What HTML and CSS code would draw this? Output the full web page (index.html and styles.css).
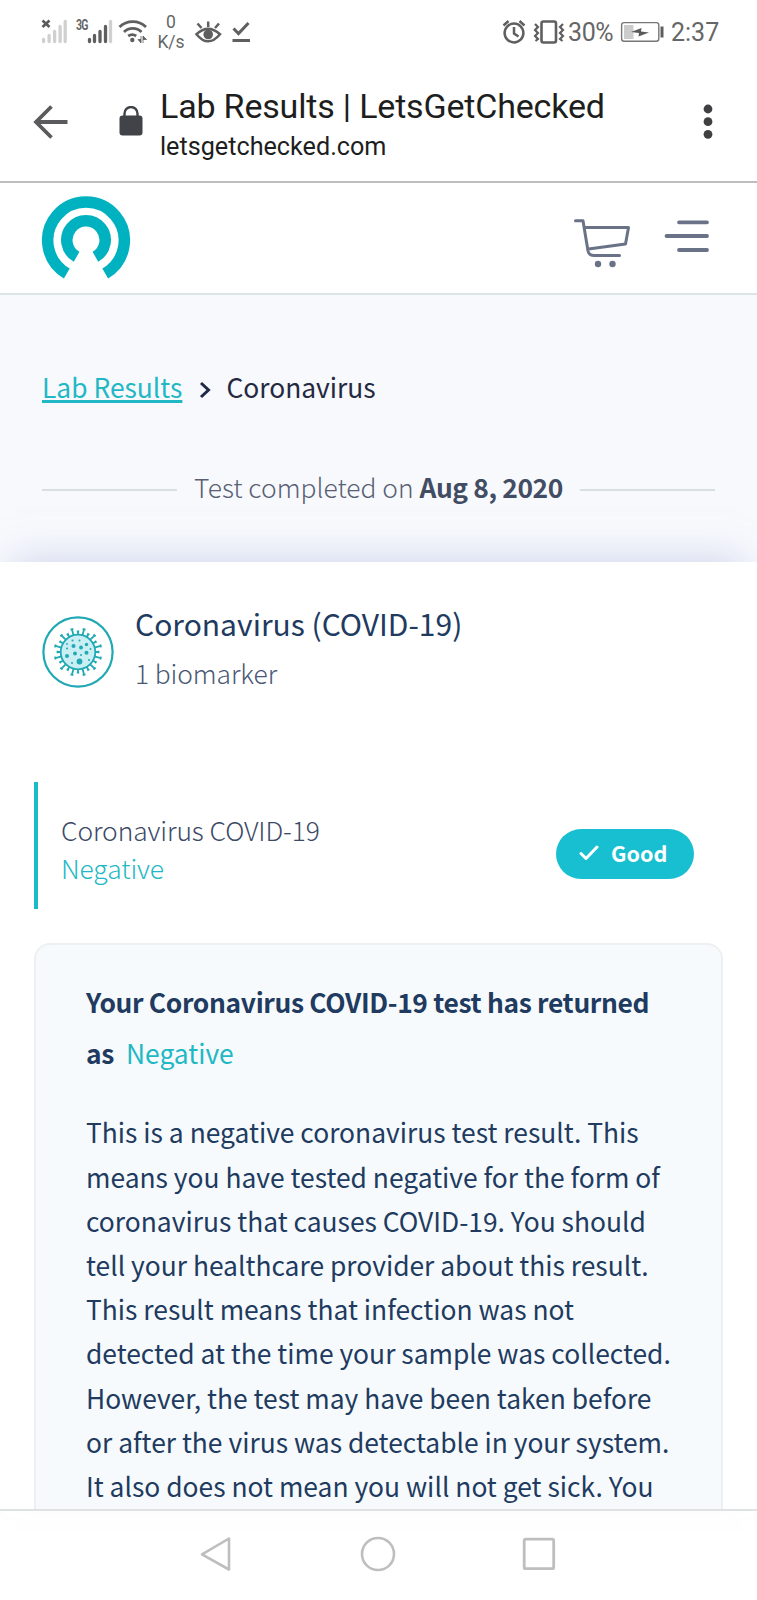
FILE: index.html
```html
<!DOCTYPE html>
<html lang="en">
<head>
<meta charset="utf-8">
<title>Lab Results | LetsGetChecked</title>
<link rel="stylesheet" href="styles.css">
</head>
<body>
<div class="phone">
  <div class="status">
    <svg class="ic-nosim" width="28" height="28" viewBox="40 17 28 28"><path d="M42.500 20.500l7 6.500M49.500 20.500l-7 6.500" stroke="#5a5a5a" stroke-width="2.600"/><path d="M43.600 39.500v2M49.100 35.500v6M54.600 31.500v10M60.100 26.500v15M65.200 21.500v20" stroke="#d0d0d0" stroke-width="3.300" stroke-linecap="round"/></svg>
    <span class="net">3G</span>
    <svg class="ic-signal" width="26" height="28" viewBox="87 17 26 28"><g stroke="#5f5f5f" stroke-width="3.300" stroke-linecap="round"><path d="M89.500 39.500v2M94.500 35.500v6M100 31.500v10M105.500 26.500v15"/><path d="M110.500 21.500v20" stroke="#d0d0d0"/></g></svg>
    <svg class="ic-wifi" width="30" height="28" viewBox="118 17 30 28"><g fill="none" stroke="#5f5f5f" stroke-width="2.800"><path d="M119.500 27a19 19 0 0 1 26.500 0M124 32a12.500 12.500 0 0 1 17.500 0M128.200 36a7 7 0 0 1 8 0"/></g><circle cx="132.300" cy="40" r="2.200" fill="#5f5f5f"/><path d="M141 36v7l-3-3.500h3M143 43v-7l3.500 3.500H143" fill="#5f5f5f" stroke="#5f5f5f" stroke-width=".8"/></svg>
    <span class="speed"><span>0</span><span>K/s</span></span>
    <svg class="ic-eye" width="28" height="28" viewBox="194 17 28 28"><path d="M196.500 34.200Q208 23.500 220 34.200Q208 48.500 196.500 34.200ZM208.200 27v-5.500M201.500 28l-4-4.500M215 28l4-4.500" fill="none" stroke="#5f5f5f" stroke-width="2.500"/><circle cx="208.200" cy="34.500" r="4.800" fill="#5f5f5f"/></svg>
    <svg class="ic-done" width="22" height="28" viewBox="230 17 22 28"><path d="M233.500 28.500l5 5L248.500 23M232.500 40.500h17.500" fill="none" stroke="#5f5f5f" stroke-width="3"/></svg>
    <span class="grow"></span>
    <svg class="ic-alarm" width="26" height="28" viewBox="501 17 26 28"><g fill="none" stroke="#5f5f5f" stroke-width="2.500"><circle cx="514" cy="33" r="9.400"/><path d="M514 27v6.500l4.500 3M503.500 25.500l5-4.500M524.500 25.500l-5-4.500"/></g></svg>
    <svg class="ic-vibrate" width="32" height="28" viewBox="533 17 32 28"><rect x="541.500" y="21.500" width="14.500" height="21" rx="2" fill="none" stroke="#5f5f5f" stroke-width="2.600"/><path d="M535 24l3 3-3 3 3 3-3 3 3 3-2.500 2M563 24l-3 3 3 3-3 3 3 3-3 3 2.500 2" fill="none" stroke="#5f5f5f" stroke-width="2.200"/></svg>
    <span class="pct">30%</span>
    <svg class="ic-batt" width="44" height="28" viewBox="620 17 44 28"><rect x="621.600" y="22.600" width="37.200" height="18.600" rx="2.500" fill="none" stroke="#777" stroke-width="1.400"/><path d="M624 25h9.500v14H624z" fill="#ccc"/><path d="M631 32l10.500-4-.5 3.500 8 1-10.500 4 .5-3.500z" fill="#5a5a5a"/><path d="M662 26.500v11" stroke="#5f5f5f" stroke-width="3"/></svg>
    <span class="time">2:37</span>
  </div>

  <div class="chrome">
    <svg class="ic-back" width="36" height="36" viewBox="0 0 36 36"><path d="M34.500 18H4M18.500 2.500L3 18l15.500 15.500" fill="none" stroke="#5b5b5e" stroke-width="3.800"/></svg>
    <svg class="ic-lock" width="24" height="30" viewBox="0 0 24 30"><rect x="0.500" y="9.500" width="23" height="20" rx="3" fill="#404347"/><path d="M5.500 11V7.500a6.500 6.500 0 0 1 13 0V11" fill="none" stroke="#404347" stroke-width="2.400"/></svg>
    <div class="page-id">
      <div class="page-title">Lab Results | LetsGetChecked</div>
      <div class="page-url">letsgetchecked.com</div>
    </div>
    <svg class="ic-more" width="10" height="36" viewBox="0 0 10 36"><g fill="#404042"><circle cx="5" cy="5" r="4.400"/><circle cx="5" cy="17.700" r="4.400"/><circle cx="5" cy="30.300" r="4.400"/></g></svg>
  </div>

  <div class="site-head">
    <svg class="logo" width="90" height="88" viewBox="0 0 90 88"><g fill="none" stroke="#00b2c0" stroke-width="11.500"><path d="M25.800 77.500A38.300 38.300 0 1 1 64.200 77.500"/><path d="M35.600 60.800A19.200 19.200 0 1 1 54.400 60.800"/></g></svg>
    <svg class="cart" width="58" height="50" viewBox="0 0 58 50"><g fill="none" stroke="#697286" stroke-width="3" stroke-linecap="round" stroke-linejoin="round"><path d="M2.500 2.800H10L15 33Q16 37.500 21 37.500H46.500M12 9.500H55.500L52.500 26L15.500 31"/></g><circle cx="25" cy="46" r="3.200" fill="#697286"/><circle cx="39.500" cy="46" r="3.200" fill="#697286"/></svg>
    <svg class="menu" width="46" height="34" viewBox="0 0 46 34"><path d="M15 3.300H43M2.500 17H43M15 31H43" stroke="#697286" stroke-width="3.800" stroke-linecap="round"/></svg>
  </div>

  <div class="hero">
    <div class="crumbs">
      <a class="crumb-link">Lab Results</a>
      <svg class="chev" width="12" height="18" viewBox="0 0 12 18"><path d="M2 2l7.500 7L2 16" fill="none" stroke="#1f2a44" stroke-width="3"/></svg>
      <span class="crumb-now">Coronavirus</span>
    </div>
    <div class="completed">
      <span class="rule"></span>
      <span>Test completed on <b>Aug 8, 2020</b></span>
      <span class="rule"></span>
    </div>
  </div>

  <div class="results">
    <div class="group">
      <svg class="virus" width="72" height="72" viewBox="-36 -36 72 72">
        <circle r="34.600" fill="#fff" stroke="#20a9b5" stroke-width="2.200"/>
        <circle r="17.300" fill="#c9eef4" stroke="#20a9b5" stroke-width="1.800"/>
        <g id="spikes" stroke="#20a9b5" fill="none" stroke-width="1.800"></g>
        <g fill="#20a9b5"><circle cx="1.500" cy="9.500" r="2.900"/><circle cx="-11" cy="4" r="2"/><circle cx="-4.500" cy="-6" r="2"/><circle cx="3" cy="-4.500" r="1.900"/><circle cx="8.500" cy="-7.500" r="1.700"/><circle cx="8.500" cy=".8" r="2"/><circle cx="-3" cy="1.500" r="1.900"/><circle cx="3" cy="3" r="1"/><circle cx="-11" cy="-3.500" r="1"/><circle cx="-5.500" cy="-11.500" r="1"/><circle cx="1.500" cy="-11.500" r="1"/><circle cx="-11" cy="-8" r=".9"/><circle cx="11" cy="8" r="1"/><circle cx="-6" cy="11" r="1"/><circle cx="12.500" cy="-3" r=".9"/></g>
      </svg>
      <div class="group-text">
        <div class="group-title">Coronavirus (COVID-19)</div>
        <div class="group-sub">1 biomarker</div>
      </div>
    </div>
    <div class="marker">
      <div class="marker-text">
        <div>Coronavirus COVID-19</div>
        <div class="teal">Negative</div>
      </div>
      <div class="pill"><svg width="20" height="16" viewBox="0 0 20 16"><path d="M2 8.500l5 5L18 2" fill="none" stroke="#fff" stroke-width="3" stroke-linecap="round" stroke-linejoin="round"/></svg><span>Good</span></div>
    </div>
    <div class="card">
      <div class="card-head"><b>Your Coronavirus COVID-19 test has returned</b><br><b>as</b><span class="verdict">Negative</span></div>
      <p class="card-body">This is a negative coronavirus test result. This<br>means you have tested negative for the form of<br>coronavirus that causes COVID-19. You should<br>tell your healthcare provider about this result.<br>This result means that infection was not<br>detected at the time your sample was collected.<br>However, the test may have been taken before<br>or after the virus was detectable in your system.<br>It also does not mean you will not get sick. You</p>
    </div>
  </div>

  <div class="navbar">
    <svg width="34" height="38" viewBox="0 0 34 38"><path d="M30 3.500V34.500L3 19.300Z" fill="none" stroke="#bebebe" stroke-width="2.600" stroke-linejoin="round"/></svg>
    <svg width="38" height="38" viewBox="0 0 38 38"><circle cx="19" cy="19" r="16" fill="none" stroke="#bebebe" stroke-width="2.600"/></svg>
    <svg width="34" height="38" viewBox="0 0 34 38"><rect x="2.200" y="4.200" width="29.500" height="29.500" rx="1.500" fill="none" stroke="#bebebe" stroke-width="2.800"/></svg>
  </div>
</div>
<script src="app.js"></script>
</body>
</html>
```
FILE: styles.css
```css
* { box-sizing: border-box; }
body { margin: 0; background: #fff; }
svg { display: block; flex: none; }
.phone { width: 757px; height: 1600px; overflow: hidden; display: flex; flex-direction: column; font-family: "Noto Sans CJK JP", "Noto Sans", sans-serif; color: #213a60; font-size: 26.4px; white-space: nowrap; }

.status { height: 65px; flex: none; display: flex; padding: 0 39px 0 40px; font-family: Roboto, sans-serif; color: #666; }
.status svg { margin-top: 17px; }
.net { width: 12px; margin: 18px 0 0 8px; font-size: 14px; line-height: 14px; font-weight: 700; letter-spacing: -1px; transform: scaleX(.75); transform-origin: 0 0; }
.ic-signal { margin-left: -1px; }
.ic-wifi { margin-left: 5px; }
.speed { width: 28px; margin: 13px 0 0 9px; display: flex; flex-direction: column; align-items: center; font-size: 17.5px; line-height: 19.5px; }
.ic-eye { margin-left: 9px; }
.ic-done { margin-left: 8px; }
.grow { flex: 1; }
.ic-vibrate { margin-left: 6px; }
.pct, .time { font-size: 25px; line-height: 30px; margin-top: 18px; }
.pct { margin-left: 3px; width: 46px; letter-spacing: -.4px; }
.ic-batt { margin-left: 6px; }
.time { margin-left: 7px; width: 47px; }

.chrome { height: 118px; flex: none; display: flex; padding: 0 44px 0 33px; border-bottom: 2px solid #bdbebf; font-family: Roboto, sans-serif; color: #1d1e20; }
.ic-back { margin-top: 39px; }
.ic-lock { margin: 41px 0 0 50px; }
.page-id { flex: 1; margin-left: 17px; padding-top: 20px; }
.page-title { font-size: 34px; line-height: 42px; letter-spacing: -.18px; }
.page-url { font-size: 25.2px; line-height: 36px; margin-top: 2px; }
.ic-more { margin-top: 39px; }

.site-head { height: 112px; flex: none; display: flex; padding: 0 47px 0 41px; border-bottom: 2px solid #dce4e8; }
.logo { margin-top: 13px; }
.cart { margin: 35px 33px 0 auto; }
.menu { margin-top: 36px; }

.hero { height: 267px; flex: none; padding: 0 42px; background: #f7f9fd; }
.crumbs { display: flex; padding-top: 70px; line-height: 44px; }
.crumb-link { color: #1fb8c4; text-decoration: underline; text-decoration-thickness: 3px; text-underline-offset: 2px; }
.chev { margin: 16px 15px 0 17px; }
.crumb-now { color: #24293f; }
.completed { display: flex; align-items: center; justify-content: space-between; line-height: 44px; margin-top: 56px; color: #596073; font-weight: 300; }
.completed b { font-weight: 700; letter-spacing: -.4px; color: #424c63; }
.rule { width: 135px; height: 2px; background: #d8dfe3; margin-top: 5px; }

.results { height: 947px; flex: none; overflow: hidden; padding: 0 34px; background: #fff; box-shadow: 0 -17px 36px -15px rgba(175, 182, 220, .55); }
.group { display: flex; padding: 38px 0 0 8px; height: 220px; }
.virus { margin-top: 16px; }
.group-text { margin: -2px 0 0 21px; }
.group-title { font-size: 30px; line-height: 50px; }
.group-sub { line-height: 49px; font-weight: 300; letter-spacing: -.1px; color: #4a5875; }
.marker { height: 127px; border-left: 4px solid #1bbac8; display: flex; justify-content: space-between; padding: 29px 29px 0 23px; font-weight: 300; }
.marker-text { line-height: 38px; letter-spacing: -.1px; color: #3c4a66; }
.marker-text .teal { color: #1fb8c4; }
.pill { width: 138px; height: 50px; margin-top: 18px; border-radius: 25px; background: #18bfd0; color: #fff; display: flex; align-items: center; padding: 0 0 3px 23px; font-size: 21.6px; font-weight: 700; line-height: 47px; gap: 12px; }
.card { margin-top: 34px; height: 700px; padding: 32px 50px; border: 2px solid #edf0f2; border-radius: 16px; background: #f6fafc; }
.card-head { line-height: 50.7px; }
.card-head b { font-weight: 700; letter-spacing: -.35px; }
.verdict { color: #1fb8c4; margin-left: 12px; }
.card-body { margin: 32px 0 0; line-height: 44.2px; }

.navbar { flex: 1; border-top: 2px solid #dfe2e3; display: flex; padding: 24px 201px 0 199px; justify-content: space-between; }
```
FILE: app.js
```js
// Spikes around the virus body: short stalks with small caps.
const spikes = document.getElementById('spikes');
for (let i = 0; i < 24; i++) {
  const p = document.createElementNS('http://www.w3.org/2000/svg', 'path');
  p.setAttribute('d', i % 2 ? 'M0 -17V-20.500M-1.200 -20.500H1.200' : 'M0 -17V-23.500M-1.500 -23.500H1.500');
  p.setAttribute('transform', `rotate(${i * 15 + 15})`);
  spikes.appendChild(p);
}
```
